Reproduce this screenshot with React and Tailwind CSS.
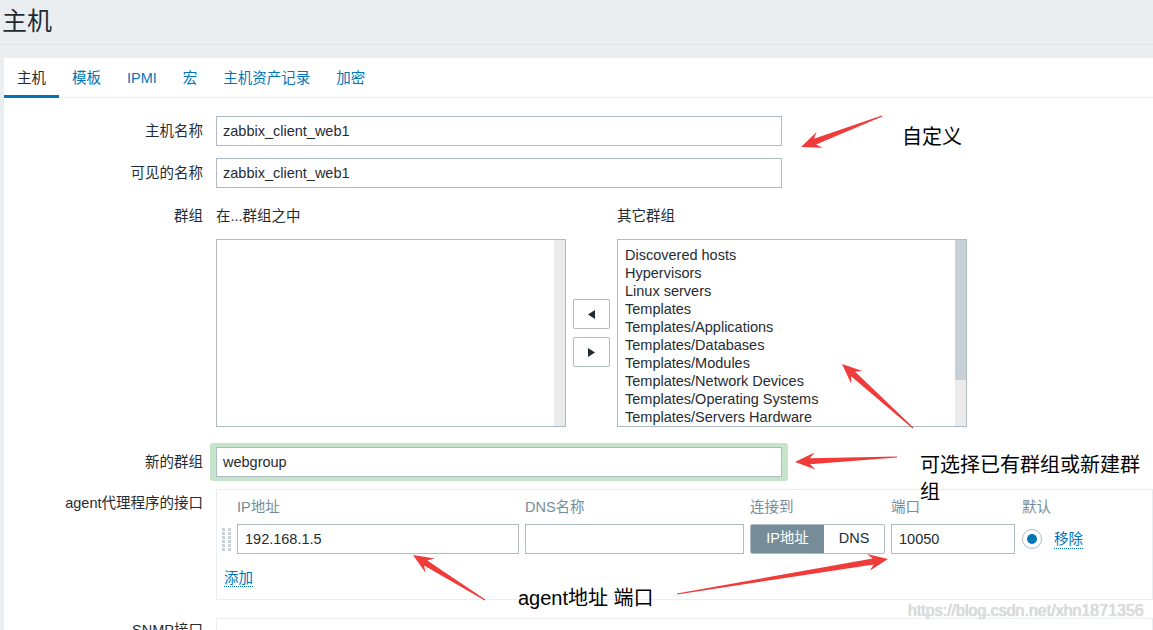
import React from "react";

const tabs = ["主机", "模板", "IPMI", "宏", "主机资产记录", "加密"];

const otherGroups = [
  "Discovered hosts",
  "Hypervisors",
  "Linux servers",
  "Templates",
  "Templates/Applications",
  "Templates/Databases",
  "Templates/Modules",
  "Templates/Network Devices",
  "Templates/Operating Systems",
  "Templates/Servers Hardware",
];

// tapered red arrow, tail -> tip
function arrowPoints(x1, y1, x2, y2) {
  const dx = x2 - x1;
  const dy = y2 - y1;
  const len = Math.hypot(dx, dy);
  const ux = dx / len;
  const uy = dy / len;
  const nx = -uy;
  const ny = ux;
  const hl = 20;
  const hw = 8.5;
  const sw = 3;
  const jx = x2 - ux * (hl - 5);
  const jy = y2 - uy * (hl - 5);
  const bx = x2 - ux * hl;
  const by = y2 - uy * hl;
  const p = [
    [x1 + nx * 0.6, y1 + ny * 0.6],
    [jx + nx * sw, jy + ny * sw],
    [bx + nx * hw, by + ny * hw],
    [x2, y2],
    [bx - nx * hw, by - ny * hw],
    [jx - nx * sw, jy - ny * sw],
    [x1 - nx * 0.6, y1 - ny * 0.6],
  ];
  return p.map((q) => q[0].toFixed(1) + "," + q[1].toFixed(1)).join(" ");
}

const Label = ({ children, className = "" }) => (
  <div className={"w-[199px] shrink-0 text-right " + className}>{children}</div>
);

const TextInput = ({ value, className = "" }) => (
  <div
    className={
      "h-[30px] border border-[#acbbc4] bg-white pl-[6px] leading-[28px] text-[#1f2c33] " +
      className
    }
  >
    {value}
  </div>
);

const DragHandle = () => (
  <svg width="9" height="23" viewBox="0 0 9 23">
    {[0, 4, 8, 12, 16, 20].map((y) => (
      <g key={y} fill="#c9d2d8">
        <rect x="0" y={y} width="3" height="3" />
        <rect x="6" y={y} width="3" height="3" />
      </g>
    ))}
  </svg>
);

const App = () => {
  return (
    <div className="relative h-[630px] overflow-hidden bg-[#ebeef0] font-['Liberation_Sans','Noto_Sans_CJK_SC',sans-serif] text-[14.5px] text-[#1f2c33]">
      <div className="h-[45px] border-b border-[#dfe4e7] pl-[2px] pt-[5px] text-[25px] leading-[32px]">
        主机
      </div>

      <div className="ml-[4px] mt-[13px] h-full bg-white">
        {/* tabs */}
        <div className="flex h-[40px] border-b border-[#ebeef0]">
          {tabs.map((t, i) => (
            <div
              key={t}
              className={
                "-mb-px flex items-center px-[13px] pt-[4px] " +
                (i === 0
                  ? "border-b-[3px] border-[#0275b8] text-[#1f2c33]"
                  : "border-b-[3px] border-transparent text-[#0275b8]")
              }
            >
              {t}
            </div>
          ))}
        </div>

        <div className="pt-[18px]">
          <div className="flex gap-[13px]">
            <Label className="leading-[30px]">主机名称</Label>
            <TextInput value="zabbix_client_web1" className="w-[566px]" />
          </div>

          <div className="mt-[12px] flex gap-[13px]">
            <Label className="leading-[30px]">可见的名称</Label>
            <TextInput value="zabbix_client_web1" className="w-[566px]" />
          </div>

          <div className="mt-[18px] flex gap-[13px]">
            <Label className="leading-[20px]">群组</Label>
            <div className="flex items-center">
              <div className="w-[350px]">
                <div className="mb-[13px] leading-[20px]">在...群组之中</div>
                <div className="flex h-[188px] border border-[#acbbc4]">
                  <div className="flex-1" />
                  <div className="w-[11px] bg-[#ebebeb]" />
                </div>
              </div>
              <div className="mx-[7px] mt-[33px] flex flex-col gap-[8px]">
                <div className="flex h-[30px] w-[37px] items-center justify-center rounded-[2px] border border-[#acbbc4]">
                  <svg width="7" height="9" viewBox="0 0 7 9">
                    <path d="M7 0 L0 4.5 L7 9 Z" fill="#1f2c33" />
                  </svg>
                </div>
                <div className="flex h-[30px] w-[37px] items-center justify-center rounded-[2px] border border-[#acbbc4]">
                  <svg width="7" height="9" viewBox="0 0 7 9">
                    <path d="M0 0 L7 4.5 L0 9 Z" fill="#1f2c33" />
                  </svg>
                </div>
              </div>
              <div className="w-[350px]">
                <div className="mb-[13px] leading-[20px]">其它群组</div>
                <div className="flex h-[188px] border border-[#acbbc4]">
                  <div className="flex-1 overflow-hidden pl-[7px] pt-[6px] leading-[18px]">
                    {otherGroups.map((g) => (
                      <div key={g}>{g}</div>
                    ))}
                  </div>
                  <div className="flex w-[11px] flex-col bg-[#ebebeb]">
                    <div className="h-[140px] bg-[#c8d0d7]" />
                  </div>
                </div>
              </div>
            </div>
          </div>

          <div className="mt-[16px] flex gap-[13px]">
            <Label className="leading-[38px]">新的群组</Label>
            <div className="-ml-[6px] rounded-[3px] bg-[#c6e4c9] px-[6px] py-[4px]">
              <TextInput value="webgroup" className="w-[566px]" />
            </div>
          </div>

          <div className="mt-[8px] flex gap-[13px]">
            <Label className="pt-[4px] leading-[20px]">agent代理程序的接口</Label>
            <div className="flex-1 border border-[#ebeef0] pb-[9px] pl-[5px] pt-[8px]">
              <div className="grid grid-cols-[9px_282px_219px_135px_124px_auto] gap-x-[6px] text-[#768d99]">
                <div />
                <div className="leading-[18px]">IP地址</div>
                <div className="leading-[18px]">DNS名称</div>
                <div className="leading-[18px]">连接到</div>
                <div className="leading-[18px]">端口</div>
                <div className="pl-[1px] leading-[18px]">默认</div>
              </div>
              <div className="mt-[8px] grid grid-cols-[9px_282px_219px_135px_124px_auto] items-center gap-x-[6px]">
                <DragHandle />
                <TextInput value="192.168.1.5" className="pl-[7px]" />
                <TextInput value="" />
                <div className="flex h-[30px] overflow-hidden rounded-[2px] border border-[#acbbc4]">
                  <div className="flex w-[73px] items-center justify-center bg-[#768d99] text-white">
                    IP地址
                  </div>
                  <div className="flex flex-1 items-center justify-center">DNS</div>
                </div>
                <TextInput value="10050" className="pl-[7px]" />
                <div className="flex items-center pl-[1px]">
                  <div className="flex h-[20px] w-[20px] items-center justify-center rounded-full border border-[#acbbc4]">
                    <div className="h-[10px] w-[10px] rounded-full bg-[#0275b8]" />
                  </div>
                  <span className="ml-[12px] border-b border-dotted border-[#0275b8] leading-[18px] text-[#0275b8]">
                    移除
                  </span>
                </div>
              </div>
              <div className="mt-[14px] pl-[2px]">
                <span className="border-b border-dotted border-[#0275b8] leading-[18px] text-[#0275b8]">
                  添加
                </span>
              </div>
            </div>
          </div>

          <div className="mt-[18px] flex gap-[13px]">
            <Label className="pt-[2px] leading-[20px]">SNMP接口</Label>
            <div className="h-[100px] flex-1 border border-[#ebeef0]" />
          </div>
        </div>
      </div>

      {/* annotations drawn over the screenshot */}
      <svg className="pointer-events-none absolute inset-0" width="1153" height="630">
        <g fill="#f03b3b">
          <polygon points={arrowPoints(882, 116, 801, 147)} />
          <polygon points={arrowPoints(913, 428, 842, 364)} />
          <polygon points={arrowPoints(897, 457, 795, 462)} />
          <polygon points={arrowPoints(485, 600, 413, 555)} />
          <polygon points={arrowPoints(677, 594, 888, 559)} />
        </g>
      </svg>
      <div className="absolute left-[902px] top-[124px] text-[20px] leading-[26px] text-black">
        自定义
      </div>
      <div className="absolute left-[920px] top-[452px] w-[226px] text-[20px] leading-[27px] text-black">
        可选择已有群组或新建群组
      </div>
      <div className="absolute left-[518px] top-[585px] text-[20px] leading-[26px] text-black">
        agent地址 端口
      </div>
      <div className="absolute left-[908px] top-[601px] text-[16px] leading-[20px] text-[#dedede] [text-shadow:0_0_1px_#b0b0b0]">
        https://blog.csdn.net/xhn1871356
      </div>
    </div>
  );
};

export default App;
